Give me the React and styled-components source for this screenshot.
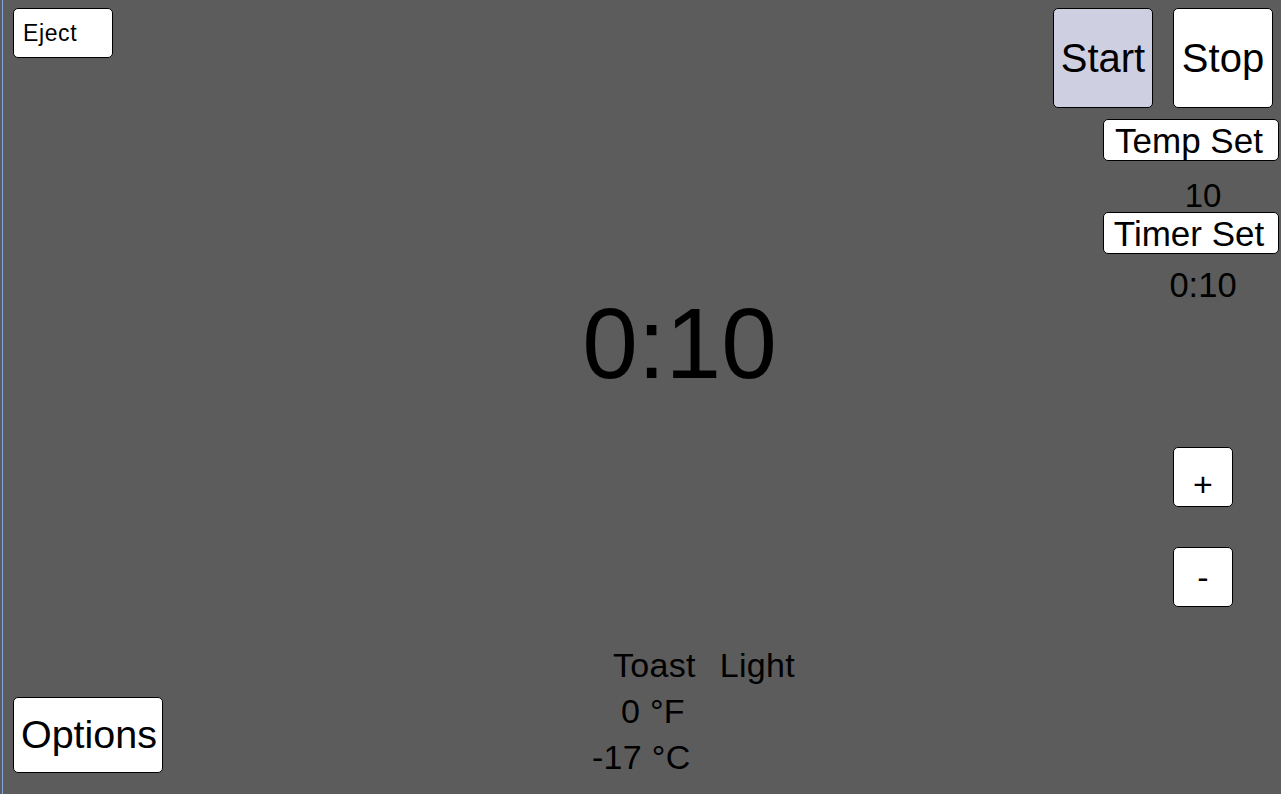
import React from 'react';
import styled, { createGlobalStyle } from 'styled-components';

const Global = createGlobalStyle`
  html, body { margin: 0; padding: 0; background: #5c5c5c; }
  body { font-family: "Liberation Sans", Arial, sans-serif; overflow: hidden; }
`;

const Page = styled.div`
  box-sizing: border-box;
  height: 794px;
  width: 1279px;
  margin-left: 2px;
  border-left: 1px solid #86a6de;
  display: flex;
  padding: 8px 2px 0 10px;
  color: #000;
`;

const LeftCol = styled.div`
  width: 150px;
  display: flex;
  flex-direction: column;
  justify-content: space-between;
  align-items: flex-start;
  padding-bottom: 21px;
`;

const Button = styled.button`
  box-sizing: border-box;
  font-family: "Liberation Sans", Arial, sans-serif;
  color: #000;
  background: ${p => p.$bg || '#fff'};
  border: 1px solid #000;
  border-radius: 5px;
  padding: 0;
  margin: 0;
  display: flex;
  align-items: center;
  justify-content: center;
  line-height: 1;
  cursor: pointer;
`;

const EjectButton = styled(Button)`
  width: 100px;
  height: 50px;
  font-size: 23px;
  letter-spacing: 0.6px;
  justify-content: flex-start;
  padding-left: 9px;
`;

const OptionsButton = styled(Button)`
  width: 150px;
  height: 76px;
  font-size: 39.5px;
  padding-left: 2px;
`;

const Center = styled.div`
  flex: 1;
  display: flex;
  flex-direction: column;
`;

const Timer = styled.div`
  font-size: 100px;
  line-height: 100px;
  margin-top: 285px;
  padding-left: 143px;
  text-align: center;
`;

const Info = styled.div`
  margin-top: auto;
  margin-bottom: 14px;
  padding-left: 429px;
  font-size: 34px;
  line-height: 46px;
  letter-spacing: 0.3px;
`;

const InfoRow = styled.div`
  display: flex;
  gap: 24px;
  padding-left: ${p => p.$indent || 0}px;
  white-space: pre;
`;

const RightCol = styled.div`
  width: 226px;
  display: flex;
  flex-direction: column;
  align-items: flex-end;
`;

const TopRow = styled.div`
  align-self: flex-start;
  display: flex;
  gap: 20px;
`;

const BigButton = styled(Button)`
  width: 100px;
  height: 100px;
  font-size: 40px;
`;

const SetButton = styled(Button)`
  width: 176px;
  height: 42px;
  font-size: 35px;
  padding-right: 4px;
  margin-top: ${p => p.$mt || 0}px;
`;

const Value = styled.div`
  width: 152px;
  text-align: center;
  font-size: ${p => p.$size || 33}px;
  line-height: 33px;
  margin-top: ${p => p.$mt || 0}px;
`;

const Stepper = styled.div`
  width: 152px;
  display: flex;
  flex-direction: column;
  align-items: center;
  gap: 40px;
  margin-top: 145px;
`;

const StepButton = styled(Button)`
  width: 60px;
  height: 60px;
  font-size: 34px;
  padding-top: ${p => p.$shift || 0}px;
`;

export default function App() {
  return (
    <>
      <Global />
      <Page>
        <LeftCol>
          <EjectButton>Eject</EjectButton>
          <OptionsButton>Options</OptionsButton>
        </LeftCol>
        <Center>
          <Timer>0:10</Timer>
          <Info>
            <InfoRow $indent={21}><span>Toast</span><span>Light</span></InfoRow>
            <InfoRow $indent={29}><span>0 °F</span></InfoRow>
            <InfoRow $indent={0}><span>-17 °C</span></InfoRow>
          </Info>
        </Center>
        <RightCol>
          <TopRow>
            <BigButton $bg="#cfcfe2">Start</BigButton>
            <BigButton>Stop</BigButton>
          </TopRow>
          <SetButton $mt={11}>Temp Set</SetButton>
          <Value $mt={18}>10</Value>
          <SetButton>Timer Set</SetButton>
          <Value $mt={15} $size={34.5}>0:10</Value>
          <Stepper>
            <StepButton $shift={14}>+</StepButton>
            <StepButton>-</StepButton>
          </Stepper>
        </RightCol>
      </Page>
    </>
  );
}
